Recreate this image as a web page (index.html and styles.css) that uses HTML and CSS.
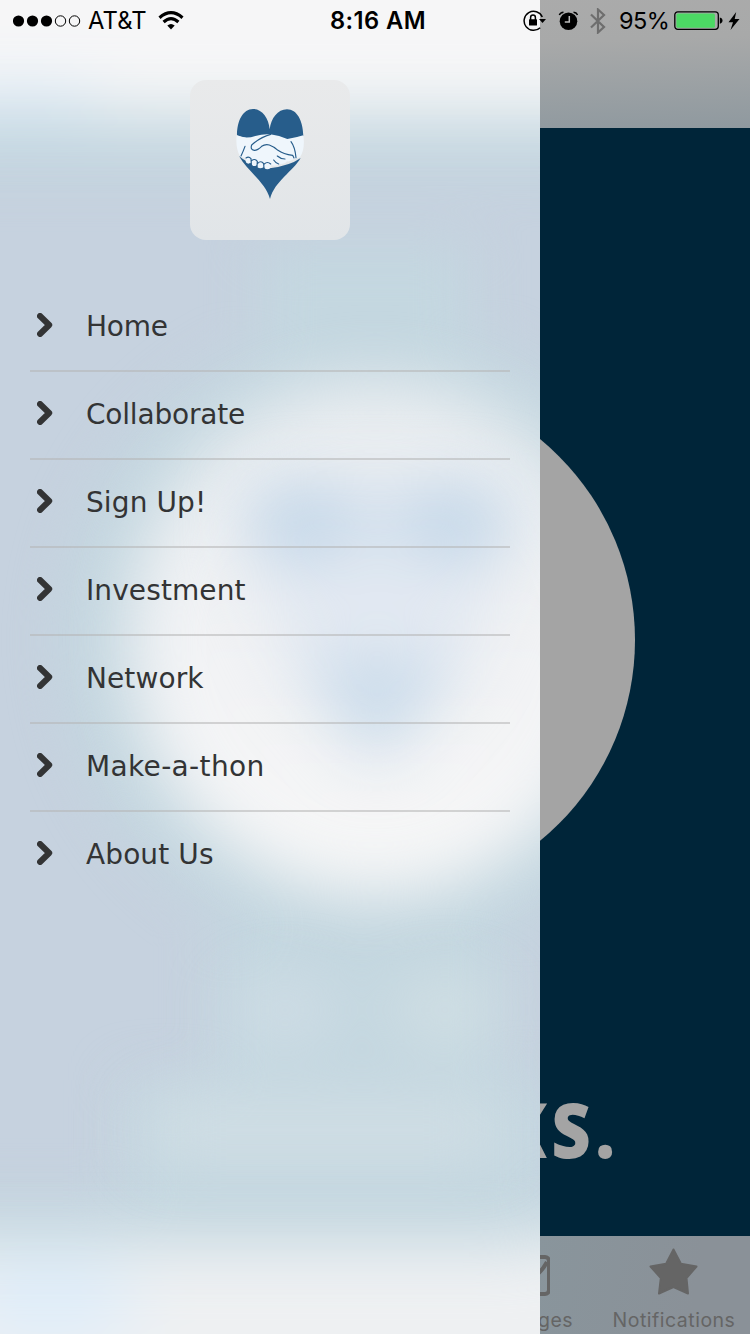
FILE: index.html
```html
<!DOCTYPE html>
<html lang="en">
<head>
<meta charset="utf-8">
<title>Menu</title>
<link rel="stylesheet" href="styles.css">
</head>
<body>
<svg class="defs" width="0" height="0" aria-hidden="true">
  <symbol id="chevron" viewBox="0 0 16 24"><path d="M3 3 12.200 12 3 21" fill="none" stroke="#333435" stroke-width="6" stroke-linecap="round" stroke-linejoin="round"/></symbol>
</svg>
<div class="screen">
  <div class="app">
    <header class="app-header"></header>
    <main class="hero">
      <div class="disc"></div>
      <div class="headline">KS.</div>
    </main>
    <nav class="tabbar">
      <div class="tab tab-messages">
        <svg width="52" height="52" viewBox="0 0 52 52" fill="none" stroke="#656565" stroke-width="4"><rect x="3" y="12" width="48" height="37" rx="4"/><path d="M4 13 27 36Q41 32 49 17"/></svg>
        <span>Messages</span>
      </div>
      <div class="tab tab-notifications">
        <svg width="52" height="52" viewBox="0 0 52 52"><path d="M25.500 4.500 32.900 18.800 48.500 21.500 38.500 33 40 48.500 25.500 42 11 48.500 12.800 33 2.500 21.500 18.100 18.800Z" fill="#656565" stroke="#656565" stroke-width="2" stroke-linejoin="round"/></svg>
        <span>Notifications</span>
      </div>
    </nav>
  </div>

  <aside class="drawer">
    <svg class="drawer-glow" width="540" height="1334" viewBox="0 0 540 1334" preserveAspectRatio="none">
      <defs>
        <filter id="soft" filterUnits="userSpaceOnUse" x="-300" y="-300" width="1300" height="1900" color-interpolation-filters="sRGB"><feGaussianBlur stdDeviation="32"/></filter>
        <filter id="wide" filterUnits="userSpaceOnUse" x="-300" y="-300" width="1300" height="1900" color-interpolation-filters="sRGB"><feGaussianBlur stdDeviation="26"/></filter>
        <linearGradient id="disc" x1="0" y1="380" x2="0" y2="900" gradientUnits="userSpaceOnUse"><stop offset="0" stop-color="#e9edf0"/><stop offset=".55" stop-color="#f2f3f5"/><stop offset="1" stop-color="#f7f7f7"/></linearGradient>
      </defs>
      <rect width="540" height="1334" fill="#c6d2df"/>
      <g filter="url(#wide)">
        <circle cx="375" cy="640" r="312" fill="#c4d7e0"/>
        <rect x="260" y="245" width="210" height="100" fill="#c4d7e0"/>
        <rect x="215" y="930" width="290" height="150" fill="#c4d7e0"/>
        <rect x="125" y="1080" width="425" height="160" fill="#c4d7e0"/>
        <rect x="-200" y="-100" width="800" height="270" fill="#c4d7e0"/>
        <rect x="-200" y="1200" width="900" height="300" fill="#c4d7e0"/>
      </g>
      <g filter="url(#soft)">
        <rect x="-200" y="-200" width="1000" height="315" fill="#f6f6f7"/>
        <ellipse cx="375" cy="638" rx="247" ry="258" fill="url(#disc)"/>
        <path d="M-200 1243H540V1233H900V1600H-200Z" fill="#eef0f2"/>
        <ellipse cx="50" cy="1302" rx="90" ry="45" fill="#dfedf9"/>
        <ellipse cx="20" cy="100" rx="90" ry="14" fill="#dcebf8"/>
      </g>
      <g filter="url(#soft)">
        <path d="M250 480H505V560L470 650 377 750 285 650 250 560Z" fill="#e0e7f1" opacity=".85"/>
        <ellipse cx="305" cy="522" rx="62" ry="38" fill="#c2d6e8"/>
        <ellipse cx="452" cy="522" rx="62" ry="38" fill="#c2d6e8"/>
        <path d="M290 660H465L377 765Z" fill="#c8daea"/>
        <ellipse cx="285" cy="1010" rx="50" ry="26" fill="#d3dfe7"/>
        <ellipse cx="445" cy="1010" rx="55" ry="28" fill="#d4e1e5"/>
        <rect x="150" y="1105" width="350" height="50" fill="#d4e0e6"/>
      </g>
    </svg>
    <div class="logo">
      <svg width="90" height="105" viewBox="0 0 270 315">
        <path d="M36 106C36 62 54 27 84 27 111 27 131 54 134 88 138 55 158 28 186 28 216 28 234 62 235 108L185 122 84 120Z" fill="#275d8b"/>
        <path d="M42 168Q72 195 134 205 195 197 227 174C204 214 149 243 135 297 121 245 66 213 42 168Z" fill="#275d8b"/>
        <path d="M35 106Q62 118 91 108 114 101 136 103 163 107 187 117 214 113 235 106C239 131 236 155 225 172L205 178Q195 186 186 184 180 193 164 192 155 200 139 196 132 206 117 201 104 204 96 194 80 196 77 188 62 188 62 175L45 169Q31 145 35 106Z" fill="#eff6fc"/>
        <g fill="#eff6fc"><ellipse cx="70" cy="181" rx="8" ry="10"/><ellipse cx="88" cy="188" rx="8" ry="10"/><circle cx="106" cy="195" r="10"/><circle cx="127" cy="198" r="10"/></g>
        <g fill="none" stroke="#275d8b" stroke-width="3.500" stroke-linecap="round" stroke-linejoin="round">
          <path d="M63 174Q71 168 78 176L79 192M80 182Q89 174 97 184L96 200M98 190Q108 180 116 191L117 206M118 192Q127 183 137 192"/>
          <path d="M137 103Q106 111 80 135 75 149 88 151 98 151 110 139 120 132 133 135 145 139 159 151 175 163 203 166L207 174"/>
          <path d="M198 125Q210 141 213 173M60 139Q55 153 48 168"/>
          <path d="M157 168Q167 177 180 177M146 180Q151 188 161 192"/>
        </g>
      </svg>
    </div>
    <ul class="menu">
      <li><svg width="16" height="24"><use href="#chevron"/></svg><span>Home</span></li>
      <li><svg width="16" height="24"><use href="#chevron"/></svg><span>Collaborate</span></li>
      <li><svg width="16" height="24"><use href="#chevron"/></svg><span class="wide">Sign Up!</span></li>
      <li><svg width="16" height="24"><use href="#chevron"/></svg><span class="wide">Investment</span></li>
      <li><svg width="16" height="24"><use href="#chevron"/></svg><span class="wide">Network</span></li>
      <li><svg width="16" height="24"><use href="#chevron"/></svg><span class="wider">Make-a-thon</span></li>
      <li><svg width="16" height="24"><use href="#chevron"/></svg><span class="wide">About Us</span></li>
    </ul>
  </aside>

  <div class="status">
    <div class="status-left">
      <svg width="68" height="12" viewBox="0 0 68 12"><circle cx="5.500" cy="6" r="5.600"/><circle cx="19.500" cy="6" r="5.600"/><circle cx="33.500" cy="6" r="5.600"/><g fill="none" stroke="#000"><circle cx="47.500" cy="6" r="5.200"/><circle cx="61.500" cy="6" r="5.200"/></g></svg>
      <span class="carrier">AT&amp;T</span>
      <svg width="26" height="20" viewBox="0 0 26 20"><path d="M13 18.500 9.300 14.600Q13 11.600 16.700 14.600Z"/><g fill="none" stroke="#000" stroke-width="3.200"><path d="M1.500 6.700Q13-3.300 24.500 6.700"/><path d="M5.600 11Q13 4.300 20.400 11"/></g></svg>
    </div>
    <span class="time">8:16 AM</span>
    <div class="status-right">
      <svg width="24" height="22" viewBox="0 0 24 22"><path d="M19.300 7A9.500 9.500 0 1 0 17.200 17.700" fill="none" stroke="#000" stroke-width="1.500"/><path d="M16 9H23L19.500 13Z"/><rect x="6" y="9.200" width="8" height="6.300" rx=".6"/><path d="M7.600 10V7.500Q7.600 5.100 10 5.100T12.400 7.500V10" fill="none" stroke="#000" stroke-width="1.500"/></svg>
      <svg class="alarm" width="20" height="20" viewBox="0 0 20 20"><circle cx="10.500" cy="10.200" r="8.800"/><path d="M1.300 4Q2.300 1.400 5.500 1.200M15.500 1.200Q18.700 1.400 19.500 4" fill="none" stroke="#000" stroke-width="1.400"/><path d="M11.300 5V11H6.800" fill="none" stroke="#bbb" stroke-width="1.500"/></svg>
      <svg class="bluetooth" width="16" height="26" viewBox="0 0 16 26"><path d="M1 6.500 14 19 8 24.500V1.500L14 7 1 19.500" fill="none" stroke="#6e6e6e" stroke-width="2.200"/></svg>
      <span class="percent">95%</span>
      <svg class="battery" width="50" height="20" viewBox="0 0 50 20"><rect x=".8" y=".8" width="43.500" height="17.500" rx="3" fill="none" stroke="#000" stroke-width="1.300"/><rect x="2.400" y="2.400" width="38.500" height="14.300" rx="1.500" fill="#4cd964"/><path d="M45.800 6.500Q48.500 7 48.500 9.600T45.800 12.700Z"/></svg>
      <svg class="bolt" width="12" height="20" viewBox="0 0 12 20"><path d="M8.200 1 0.500 11.200H5L2.500 19 11.500 8H6.700Z"/></svg>
    </div>
  </div>
</div>
</body>
</html>
```
FILE: styles.css
```css
* { box-sizing: border-box; }
body { margin: 0; }
svg { display: block; flex: none; }
.defs { position: absolute; }
.screen {
  position: relative;
  width: 750px;
  height: 1334px;
  overflow: hidden;
  font-family: Inter, "Liberation Sans", sans-serif;
}
.app { display: flex; flex-direction: column; height: 100%; }
.app-header {
  height: 128px;
  background: linear-gradient(178deg, #ababab 0%, #a8a9a9 40%, #8f999f 100%);
}
.hero {
  flex: 1;
  display: flex;
  flex-direction: column;
  align-items: center;
  padding-top: 252px;
  background: #002539;
}
.disc { width: 520px; height: 520px; border-radius: 50%; background: #a4a4a4; }
.headline {
  align-self: flex-end;
  margin: 182px 130px 0 0;
  font: 800 77px/94px "Open Sans", sans-serif;
  letter-spacing: 5px;
  transform: scaleX(.89);
  transform-origin: right center;
  color: #a4a4a4;
}
.tabbar {
  height: 98px;
  display: flex;
  justify-content: flex-end;
  padding-right: 1px;
  background: linear-gradient(100deg, #89959c 70%, #8a9198 92%);
}
.tab {
  width: 150px;
  display: flex;
  flex-direction: column;
  align-items: center;
  padding-top: 9px;
  font-size: 19.5px;
  line-height: 24px;
  letter-spacing: .5px;
  color: #656565;
}
.tab span { margin-top: 11px; }

.drawer {
  position: absolute;
  z-index: 1;
  left: 0;
  top: 0;
  width: 540px;
  height: 1334px;
  overflow: hidden;
  padding: 80px 30px 0;
}
.drawer-glow { position: absolute; left: 0; top: 0; z-index: -1; }
.logo {
  width: 160px;
  height: 160px;
  margin: 0 auto 44px;
  padding-top: 20px;
  border-radius: 16px;
  background: linear-gradient(#e9eaeb, #e1e5e8);
}
.logo svg { margin: 0 auto; }
.menu { list-style: none; margin: 0; padding: 0; }
.menu li {
  height: 88px;
  display: flex;
  align-items: center;
  gap: 33px;
  padding: 0 0 1px 7px;
  border-bottom: 2px solid rgba(180, 180, 180, .55);
  font: 28px/34px "DejaVu Sans", sans-serif;
  letter-spacing: -.2px;
  color: #333435;
}
.menu li:last-child { border-color: transparent; }
.menu svg { margin-bottom: 4px; }
.menu .wide { letter-spacing: .1px; }
.menu .wider { letter-spacing: .35px; }

.status {
  position: absolute;
  z-index: 2;
  inset: 0 0 auto;
  height: 41px;
  display: grid;
  grid-template-columns: 330px 1fr auto;
  align-items: center;
  padding-right: 10px;
  font-size: 24px;
  line-height: 31px;
}
.status-left, .status-right { display: flex; align-items: center; }
.status-left { padding-left: 13px; }
.carrier { width: 77px; padding-left: 7px; font-size: 23.8px; letter-spacing: .1px; }
.time { font-weight: 600; font-size: 23.7px; letter-spacing: .45px; }
.alarm { margin-left: 11px; }
.bluetooth { margin-left: 12px; }
.percent { width: 68px; padding-left: 13px; font-size: 23.5px; letter-spacing: -.5px; }
.bolt { margin-left: 4px; }
```
